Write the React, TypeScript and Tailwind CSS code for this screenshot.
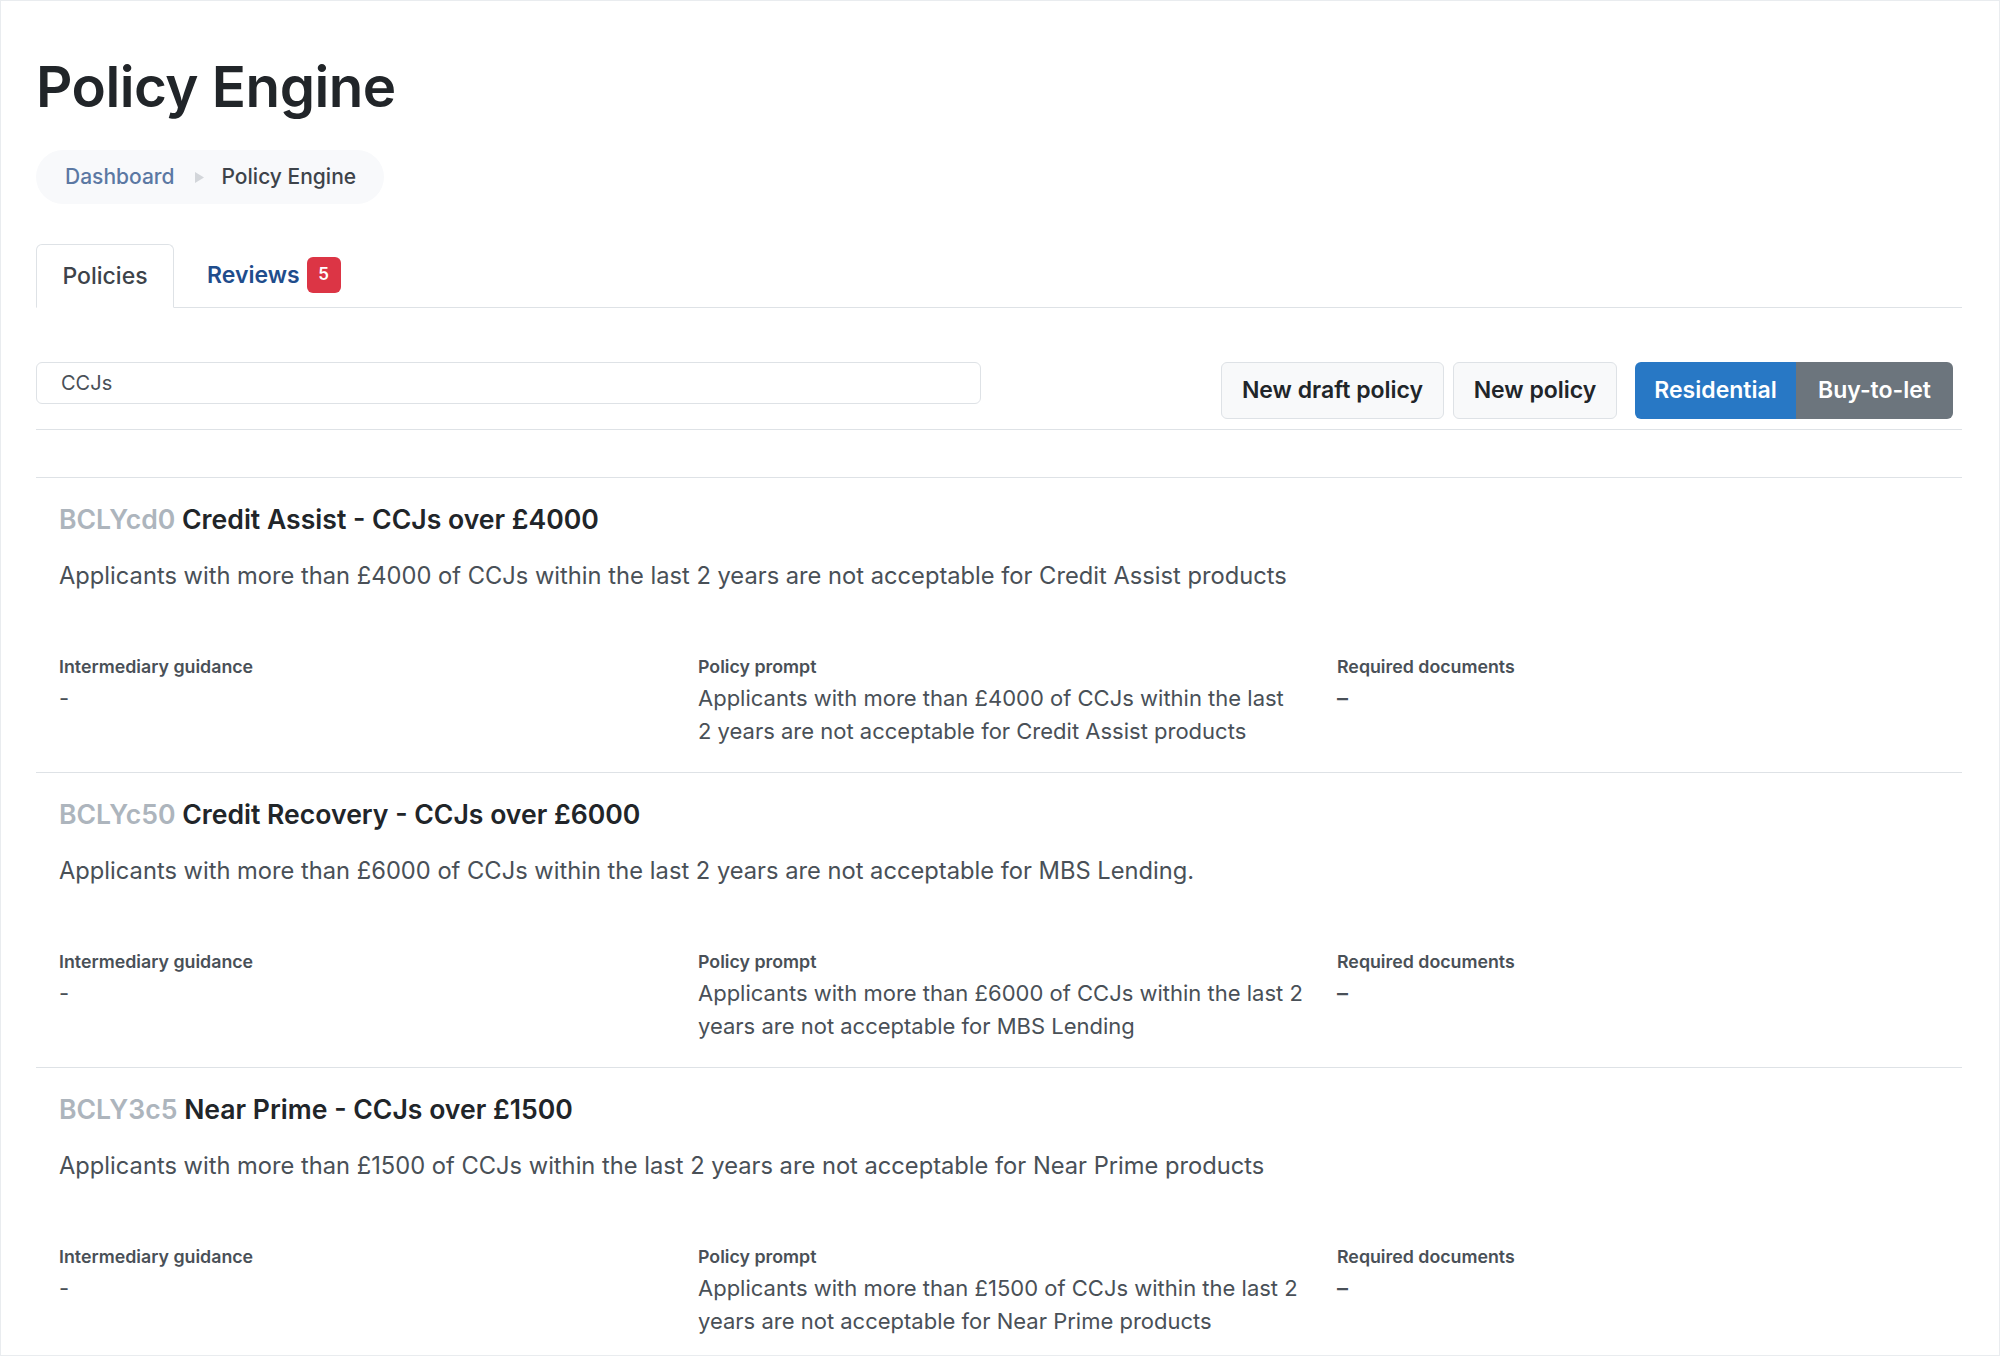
import React from 'react';

const policies = [
  {
    id: 'BCLYcd0',
    title: 'Credit Assist - CCJs over £4000',
    description: 'Applicants with more than £4000 of CCJs within the last 2 years are not acceptable for Credit Assist products',
    prompt: 'Applicants with more than £4000 of CCJs within the last 2 years are not acceptable for Credit Assist products',
  },
  {
    id: 'BCLYc50',
    title: 'Credit Recovery - CCJs over £6000',
    description: 'Applicants with more than £6000 of CCJs within the last 2 years are not acceptable for MBS Lending.',
    prompt: 'Applicants with more than £6000 of CCJs within the last 2 years are not acceptable for MBS Lending',
  },
  {
    id: 'BCLY3c5',
    title: 'Near Prime - CCJs over £1500',
    description: 'Applicants with more than £1500 of CCJs within the last 2 years are not acceptable for Near Prime products',
    prompt: 'Applicants with more than £1500 of CCJs within the last 2 years are not acceptable for Near Prime products',
  },
];

const PolicyItem = ({ p }: { p: (typeof policies)[number] }) => {
  return (
    <div className="border-t border-[#dee2e6] px-[23px] pt-[22px] h-[295px]">
      <h3 className="text-[26.6px] leading-[38px] font-semibold text-[#212529]">
        <span className="text-[#adb5bd]">{p.id}</span> {p.title}
      </h3>
      <p className="mt-[19px] text-[23.7px] leading-[38px] text-[#495057]">{p.description}</p>
      <div className="mt-[59px] grid grid-cols-[639px_639px_1fr]">
        <div>
          <div className="text-[17.8px] leading-[26px] font-semibold text-[#495057]">Intermediary guidance</div>
          <div className="mt-[2px] text-[22px] leading-[33px] text-[#495057]">-</div>
        </div>
        <div>
          <div className="text-[17.8px] leading-[26px] font-semibold text-[#495057]">Policy prompt</div>
          <div className="mt-[2px] max-w-[605px] text-[22px] leading-[33px] text-[#495057]">{p.prompt}</div>
        </div>
        <div>
          <div className="text-[17.8px] leading-[26px] font-semibold text-[#495057]">Required documents</div>
          <div className="mt-[2px] text-[22px] leading-[33px] font-semibold text-[#495057]">–</div>
        </div>
      </div>
    </div>
  );
};

const App = () => {
  return (
    <div
      className="w-[2000px] h-[1356px] overflow-hidden bg-white border border-[#e9ecef] pl-[35px] pr-[37px]"
      style={{ fontFamily: 'Inter, "Noto Sans", sans-serif' }}
    >
      {/* header */}
      <h1 className="pt-[50px] text-[56.5px] leading-[72px] font-semibold tracking-[-0.5px] text-[#212529]">Policy Engine</h1>
      <div className="mt-[27px] inline-flex items-center h-[54px] rounded-[27px] bg-[#f8f9fb] pl-[29px] pr-[28px] text-[21px] font-medium">
        <a className="text-[#5b78a3]">Dashboard</a>
        <svg className="ml-[19px] mr-[17px]" width="11" height="13" viewBox="0 0 11 13">
          <path d="M1 1 L10 6.5 L1 12 Z" fill="#d3d6da" />
        </svg>
        <span className="text-[#3d434a]">Policy Engine</span>
      </div>

      {/* tabs */}
      <div className="mt-[39px] flex items-end border-b border-[#dee2e6]">
        <div className="-mb-px h-[64px] w-[138px] flex items-center justify-center rounded-t-[6px] border border-[#dee2e6] border-b-white bg-white text-[23px] font-medium text-[#3d434a]">
          Policies
        </div>
        <div className="h-[64px] flex items-center pl-[33px] text-[23px] font-semibold text-[#1f4d8c]">
          Reviews
          <span className="ml-[7px] flex h-[36px] w-[34px] items-center justify-center rounded-[6px] bg-[#dc3545] text-[17px] font-semibold text-white">5</span>
        </div>
      </div>

      {/* toolbar */}
      <div className="mt-[54px] flex items-start justify-between border-b border-[#dee2e6] pb-[10px] pr-[9px]">
        <input
          defaultValue="CCJs"
          className="h-[42px] w-[945px] rounded-[6px] border border-[#dee2e6] px-[24px] text-[20px] text-[#495057] outline-none"
        />
        <div className="flex items-center">
          <button className="h-[57px] w-[223px] rounded-[6px] border border-[#dee2e6] bg-[#f8f9fa] text-[23px] font-semibold text-[#212529]">New draft policy</button>
          <button className="ml-[9px] h-[57px] w-[164px] rounded-[6px] border border-[#dee2e6] bg-[#f8f9fa] text-[23px] font-semibold text-[#212529]">New policy</button>
          <div className="ml-[18px] flex overflow-hidden rounded-[6px]">
            <button className="h-[57px] w-[161px] bg-[#2878c5] text-[23px] font-semibold text-white">Residential</button>
            <button className="h-[57px] w-[157px] bg-[#6c757d] text-[23px] font-semibold text-white">Buy-to-let</button>
          </div>
        </div>
      </div>

      {/* list */}
      <div className="mt-[47px]">
        {policies.map((p) => (
          <PolicyItem key={p.id} p={p} />
        ))}
      </div>
    </div>
  );
};

export default App;
